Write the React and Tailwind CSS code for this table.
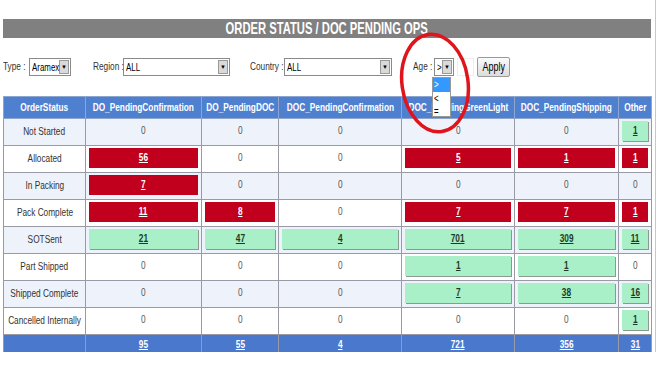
const cols = [
  { name: 'OrderStatus', w: 'w-[82px]' },
  { name: 'DO_PendingConfirmation', w: 'w-[116px]' },
  { name: 'DO_PendingDOC', w: 'w-[77px]' },
  { name: 'DOC_PendingConfirmation', w: 'w-[123px]' },
  { name: 'DOC_PendingGreenLight', w: 'w-[113px]' },
  { name: 'DOC_PendingShipping', w: 'w-[104px]' },
  { name: 'Other', w: 'w-[33px]' },
];

// r = red (overdue), g = green (ok), plain number = nothing pending
const rows = [
  ['Not Started', 0, 0, 0, 0, 0, 'g1'],
  ['Allocated', 'r56', 0, 0, 'r5', 'r1', 'r1'],
  ['In Packing', 'r7', 0, 0, 0, 0, 0],
  ['Pack Complete', 'r11', 'r8', 0, 'r7', 'r7', 'r1'],
  ['SOTSent', 'g21', 'g47', 'g4', 'g701', 'g309', 'g11'],
  ['Part Shipped', 0, 0, 0, 'g1', 'g1', 0],
  ['Shipped Complete', 0, 0, 0, 'g7', 'g38', 'g16'],
  ['Cancelled Internally', 0, 0, 0, 0, 0, 'g1'],
];

const totals = [95, 55, 4, 721, 356, 31];

// the old page renders a condensed face; squeeze the text horizontally
function T({ children, left, narrow }) {
  return (
    <span
      className={`inline-block whitespace-nowrap ${narrow ? 'scale-x-[0.68]' : 'scale-x-[0.72]'} ${left ? 'origin-left' : 'origin-center'}`}
    >
      {children}
    </span>
  );
}

function Cell({ v }) {
  if (typeof v === 'number') {
    return (
      <div className="h-[20px] flex items-center justify-center text-[#555]">
        <T>{v}</T>
      </div>
    );
  }
  const n = v.slice(1);
  if (v[0] === 'r') {
    return (
      <div className="h-[20px] flex items-center justify-center bg-[#c0001c] text-white font-bold underline">
        <T>{n}</T>
      </div>
    );
  }
  return (
    <div className="h-[20px] flex items-center justify-center bg-[#a9efc7] text-[#1f3a2a] font-bold underline shadow-[1px_1px_0_#8a9a90]">
      <T>{n}</T>
    </div>
  );
}

function SelectBox({ value, w }) {
  return (
    <div className={`${w} h-[18px] flex items-center border border-[#8a8a8a] bg-white`}>
      <span className="flex-1 min-w-0 pl-[2px] text-[11px] text-black leading-none">
        <T left>{value}</T>
      </span>
      <span className="shrink-0 w-[10px] h-[14px] mr-[1px] flex items-center justify-center bg-[#d9d9d9] border border-[#999] text-[6px] text-black">
        ▼
      </span>
    </div>
  );
}

export default function App() {
  return (
    <div
      className="w-[656px] h-[352px] border-r border-[#c8c8c8] bg-white relative pt-[19px]"
      style={{ fontFamily: '"Liberation Sans", Arial, sans-serif' }}
    >
      {/* Title bar */}
      <div className="ml-[3px] w-[648px] h-[19px] bg-[#808080] flex items-center justify-center overflow-hidden">
        <span className="text-white font-bold text-[16.5px] leading-none">
          <T narrow>ORDER STATUS / DOC PENDING OPS</T>
        </span>
      </div>

      {/* Filters */}
      <div className="mt-[20px] h-[18px] flex items-center text-[11.5px] text-[#333]">
        <span className="ml-[3px] w-[26px]"><T left>Type :</T></span>
        <SelectBox value="Aramex" w="w-[42px]" />
        <span className="ml-[22px] w-[30px]"><T left>Region :</T></span>
        <SelectBox value="ALL" w="w-[107px]" />
        <span className="ml-[20px] w-[34px]"><T left>Country :</T></span>
        <SelectBox value="ALL" w="w-[108px]" />
        <span className="ml-[21px] w-[21px]"><T left>Age :</T></span>
        <SelectBox value=">" w="w-[20px]" />
        <div className="ml-[3px] w-[17px] h-[18px] border border-[#eee]" />
        <button className="ml-[3px] w-[33px] h-[20px] border border-[#9a9a9a] rounded-[2px] bg-gradient-to-b from-[#fbfbfb] to-[#dcdcdc] text-[12.5px] text-black leading-none flex items-center justify-center">
          <T>Apply</T>
        </button>
      </div>

      {/* Table */}
      <table className="mt-[20px] ml-[3px] w-[648px] border-collapse table-fixed text-[11.5px]">
        <colgroup>
          {cols.map((c) => (
            <col key={c.name} className={c.w} />
          ))}
        </colgroup>
        <thead>
          <tr className="h-[22px] bg-[#4f80d0]">
            {cols.map((c) => (
              <th key={c.name} className="border border-[#8ea6cf] text-white font-bold p-0">
                <div className="flex justify-center">
                  <T>{c.name}</T>
                </div>
              </th>
            ))}
          </tr>
        </thead>
        <tbody>
          {rows.map((r, i) => (
            <tr key={r[0]} className={`h-[27px] ${i % 2 === 0 ? 'bg-[#eef2fb]' : 'bg-white'}`}>
              <td className="border border-[#9a9aa6] text-[#333] p-0">
                <div className="flex justify-center">
                  <T>{r[0]}</T>
                </div>
              </td>
              {r.slice(1).map((v, j) => (
                <td key={j} className="border border-[#9a9aa6] pt-[2px] pb-[3px] px-[3px] align-top">
                  <Cell v={v} />
                </td>
              ))}
            </tr>
          ))}
          <tr className="h-[21px] bg-[#4a78cd]">
            <td className="border border-[#9a9aa6]" />
            {totals.map((t, i) => (
              <td key={i} className="border border-[#9a9aa6] text-white font-bold underline p-0">
                <div className="flex justify-center">
                  <T>{t}</T>
                </div>
              </td>
            ))}
          </tr>
        </tbody>
      </table>

      {/* Open Age dropdown */}
      <div className="absolute left-[432px] top-[77px] w-[19px] h-[40px] bg-white border border-[#999] text-[11px] text-black leading-[12px]">
        <div className="bg-[#3399ff] text-white pl-[1px] h-[14px]"><T left>&gt;</T></div>
        <div className="pl-[1px] h-[13px]"><T left>&lt;</T></div>
        <div className="pl-[1px] h-[12px]"><T left>=</T></div>
      </div>

      {/* Red highlight ellipse */}
      <svg className="absolute left-[397px] top-[31px]" width="80" height="106" viewBox="0 0 80 106">
        <ellipse cx="38" cy="52" rx="33" ry="49" fill="none" stroke="#e0141c" strokeWidth="3.5" transform="rotate(-8 38 52)" />
      </svg>
    </div>
  );
}
